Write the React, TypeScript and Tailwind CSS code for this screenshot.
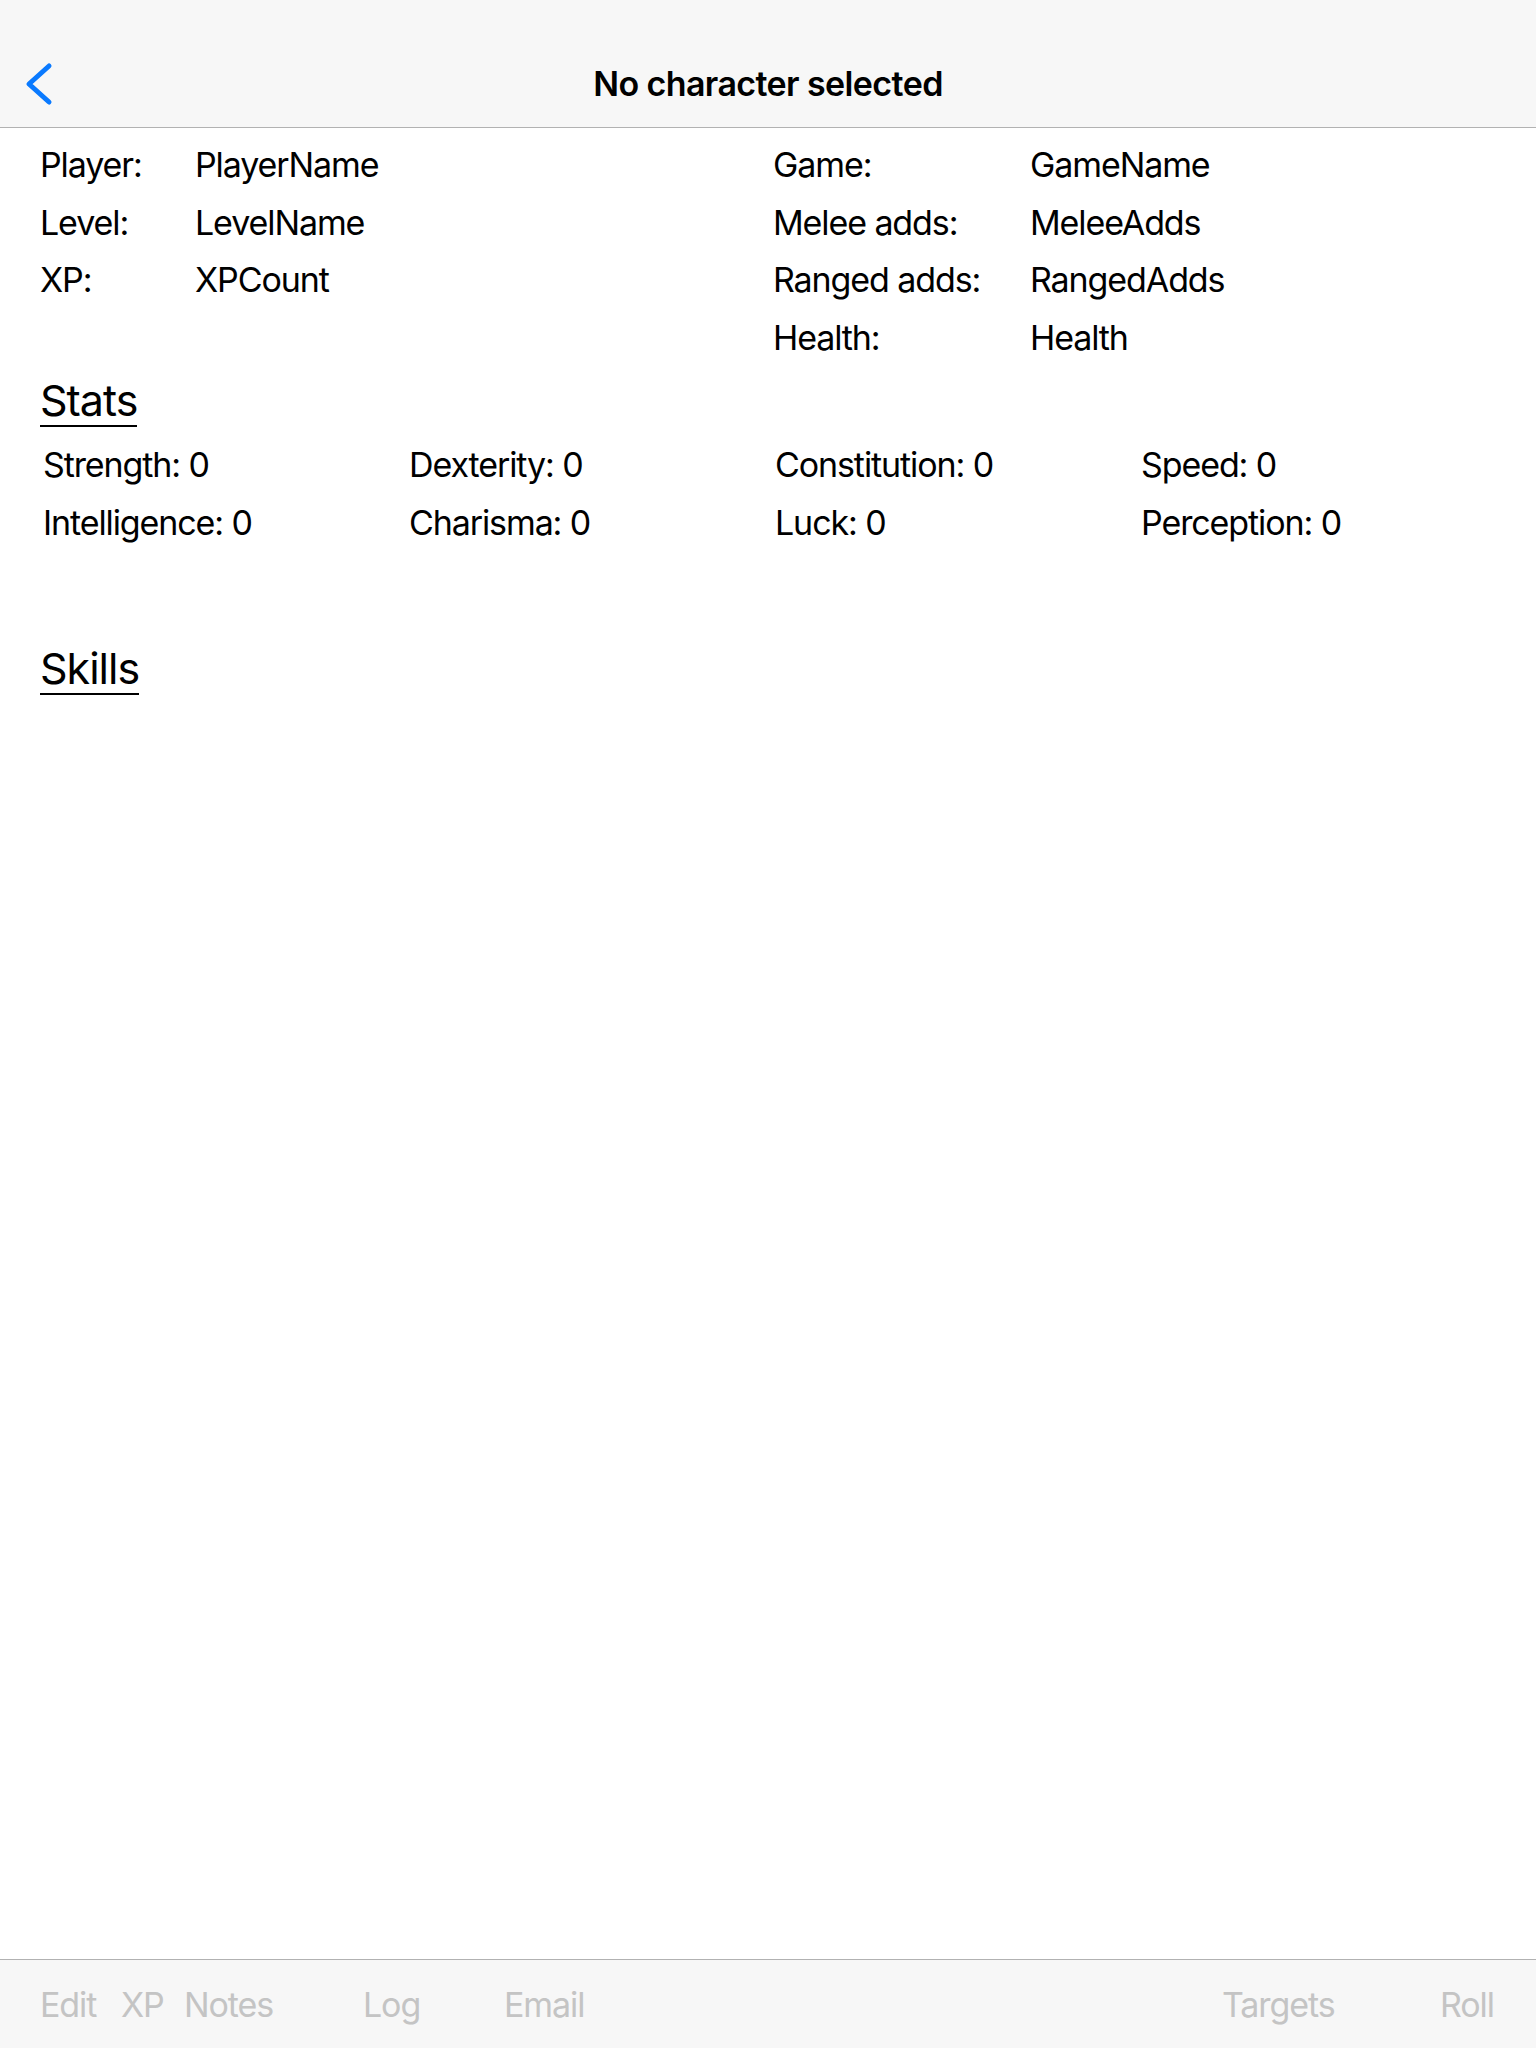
import React from "react";

const font = { fontFamily: "Inter, 'Noto Sans', sans-serif" };

function InfoRow({ label, value }: { label: string; value: string }) {
  return (
    <>
      <div className="h-[57.5px] flex items-center">{label}</div>
      <div className="h-[57.5px] flex items-center">{value}</div>
    </>
  );
}

export default function App() {
  const stats = [
    "Strength: 0",
    "Dexterity: 0",
    "Constitution: 0",
    "Speed: 0",
    "Intelligence: 0",
    "Charisma: 0",
    "Luck: 0",
    "Perception: 0",
  ];
  return (
    <div
      className="w-[1536px] h-[2048px] flex flex-col bg-white text-black text-[34px] tracking-[-1.1px]"
      style={font}
    >
      {/* Nav bar */}
      <header className="h-[128px] shrink-0 bg-[#f7f7f7] border-b border-[#b2b2b2] pt-[40px]">
        <div className="relative h-[87px] flex items-center justify-center">
          <svg
            className="absolute left-[22px] top-[22px]"
            width="32"
            height="44"
            viewBox="0 0 32 44"
            fill="none"
          >
            <path
              d="M27 4 L7 22 L27 40"
              stroke="#0a7aff"
              strokeWidth="5"
              strokeLinecap="round"
              strokeLinejoin="round"
            />
          </svg>
          <span className="font-semibold text-[34px] tracking-[-0.6px]">
            No character selected
          </span>
        </div>
      </header>

      {/* Content */}
      <main className="flex-1 pl-[40px] pt-[8px]">
        <div className="grid grid-cols-[155px_578px_257px_1fr]">
          <InfoRow label="Player:" value="PlayerName" />
          <InfoRow label="Game:" value="GameName" />
          <InfoRow label="Level:" value="LevelName" />
          <InfoRow label="Melee adds:" value="MeleeAdds" />
          <InfoRow label="XP:" value="XPCount" />
          <InfoRow label="Ranged adds:" value="RangedAdds" />
          <div />
          <div />
          <InfoRow label="Health:" value="Health" />
        </div>

        <div className="mt-[9px]">
          <span className="inline-block text-[43px] leading-[50px] tracking-[-1px] border-b-2 border-black">
            Stats
          </span>
        </div>

        <div className="mt-[7px] pl-[3px] grid grid-cols-[366px_366px_366px_1fr]">
          {stats.map((s) => (
            <div key={s} className="h-[57.5px] flex items-center">
              {s}
            </div>
          ))}
        </div>

        <div className="mt-[92px]">
          <span className="inline-block text-[43px] leading-[50px] tracking-[-1px] border-b-2 border-black">
            Skills
          </span>
        </div>
      </main>

      {/* Toolbar */}
      <footer className="h-[89px] shrink-0 bg-[#f7f7f7] border-t border-[#b2b2b2] flex items-center pl-[40px] text-[#c4c4c4]">
        <span className="w-[81px]">Edit</span>
        <span className="w-[63px]">XP</span>
        <span className="w-[179px]">Notes</span>
        <span className="w-[141px]">Log</span>
        <span className="w-[718px]">Email</span>
        <span className="w-[218px]">Targets</span>
        <span>Roll</span>
      </footer>
    </div>
  );
}
